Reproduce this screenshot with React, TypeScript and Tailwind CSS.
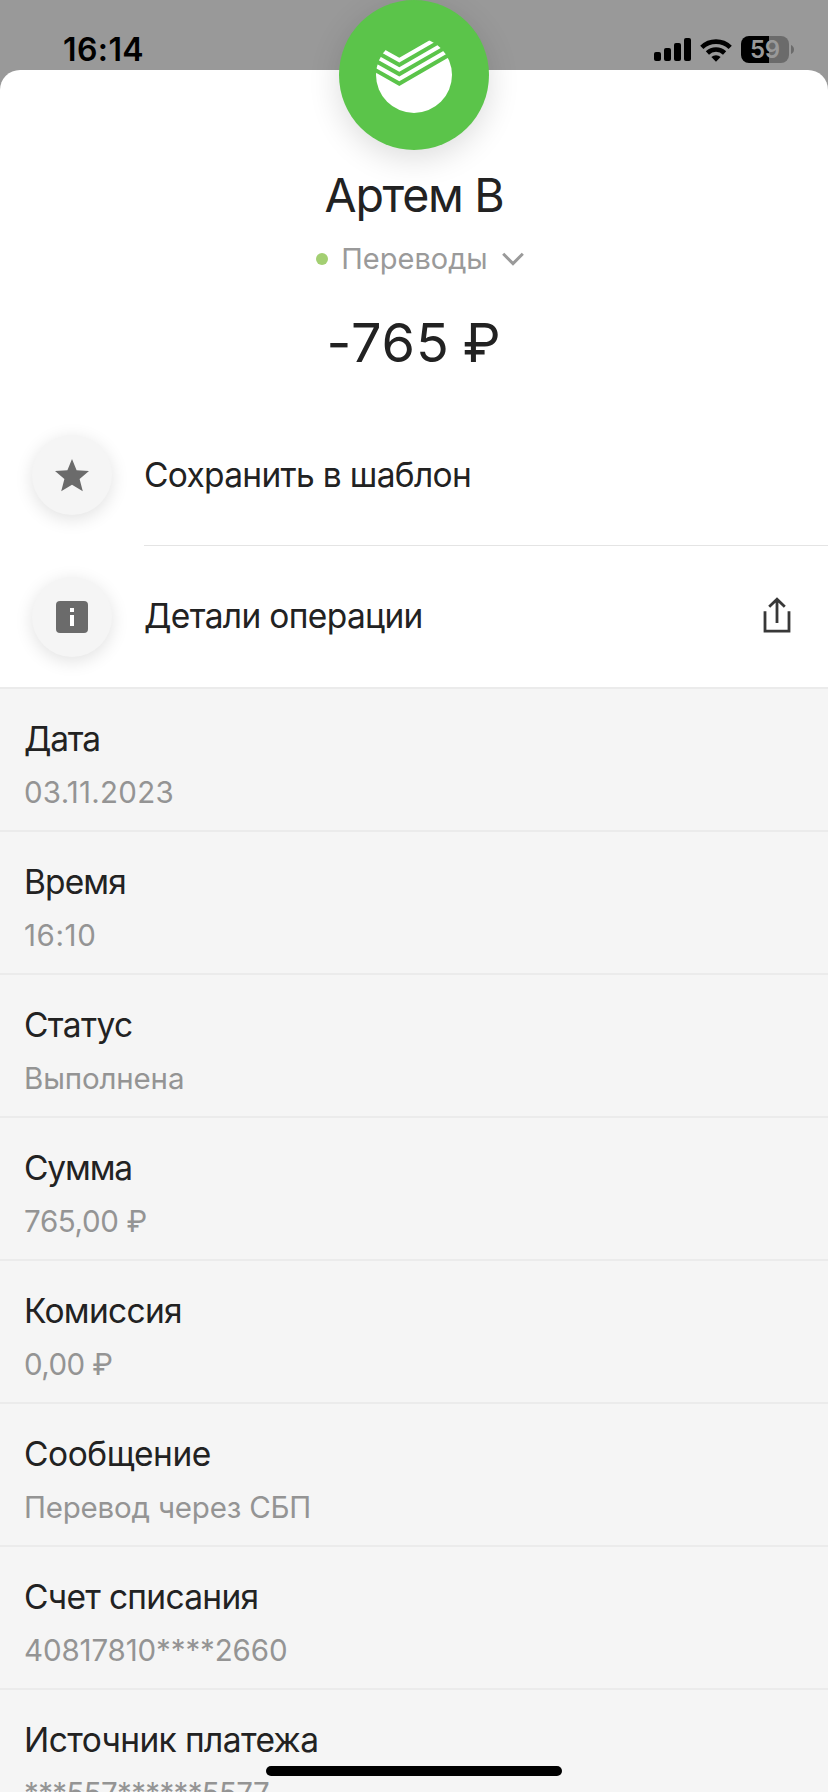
const details = [
  { label: "Дата", labelClass: "tracking-[-1.2px]", value: "03.11.2023", valueClass: "tracking-[0.25px]" },
  { label: "Время", labelClass: "tracking-[-0.9px]", value: "16:10", valueClass: "tracking-[0.6px]" },
  { label: "Статус", labelClass: "tracking-[-0.65px]", value: "Выполнена", valueClass: "tracking-[-0.15px]" },
  { label: "Сумма", labelClass: "tracking-[-1.15px]", value: "765,00 ₽", valueClass: "tracking-[-0.35px]" },
  { label: "Комиссия", labelClass: "tracking-[-0.7px]", value: "0,00 ₽", valueClass: "tracking-[-0.6px]" },
  { label: "Сообщение", labelClass: "tracking-[-0.45px]", value: "Перевод через СБП", valueClass: "tracking-[-0.2px]" },
  { label: "Счет списания", labelClass: "tracking-[-0.7px]", value: "40817810****2660", valueClass: "tracking-[-0.12px]" },
  { label: "Источник платежа", labelClass: "tracking-[-0.6px]", value: "***557******5577", valueClass: "tracking-[-0.65px]" },
];

function SignalIcon() {
  return (
    <svg width="37" height="23" viewBox="0 0 37 23" className="shrink-0">
      <rect x="0" y="14" width="7" height="9" rx="2" />
      <rect x="10" y="10" width="7" height="13" rx="2" />
      <rect x="20" y="5" width="7" height="18" rx="2" />
      <rect x="30" y="0" width="7" height="23" rx="2" />
    </svg>
  );
}

function WifiIcon() {
  return (
    <svg width="32" height="24" viewBox="0 0 32 24" className="shrink-0">
      <g fill="none" stroke="#000" strokeWidth="4.6">
        <path d="M1.8 9.4A20.4 20.4 0 0 1 30.2 9.4" />
        <path d="M7.4 15A12.4 12.4 0 0 1 24.6 15" />
      </g>
      <path d="M11.4 19A6.6 6.6 0 0 1 20.6 19L16 23.8Z" />
    </svg>
  );
}

function Battery() {
  return (
    <div className="flex items-center gap-0.5">
      <div className="flex h-[27px] w-12 items-center justify-center rounded-[8px] bg-[linear-gradient(90deg,#000_28px,#6b6b6b_28px)]">
        <span className="text-[24px] leading-none font-semibold tracking-[-0.2px] text-[#999]">59</span>
      </div>
      <svg width="3" height="9" viewBox="0 0 3 9">
        <path d="M0 0Q3 1.5 3 4.5T0 9Z" fill="#6b6b6b" />
      </svg>
    </div>
  );
}

function BankLogo() {
  return (
    <svg width="76" height="76" viewBox="0 0 76 76">
      <defs>
        <clipPath id="disc">
          <circle cx="38" cy="38" r="38" />
        </clipPath>
      </defs>
      <g clipPath="url(#disc)" fill="#fff">
        <path d="M-4 5.5L23.3 20.8L76 -9.6V-4.9L23.3 25.5L-4 10.2Z" />
        <path d="M-4 14.9L23.3 30.2L76 -.2V4.5L23.3 34.8L-4 19.5Z" />
        <path d="M-4 24.3L23.3 39.5L76 9.1V13.8L23.3 44.2L-4 28.9Z" />
        <path d="M-4 33.6L23.3 48.9L76 18.5V76H-4Z" />
      </g>
    </svg>
  );
}

function StarIcon() {
  return (
    <svg width="34" height="33" viewBox="0 0 34 33" fill="#6b6b6b">
      <path d="M17 0L21.6 11.2L34 12L24.6 20L27.8 32.3L17 25.8L6.2 32.3L9.4 20L0 12L12.4 11.2Z" />
    </svg>
  );
}

function InfoIcon() {
  return (
    <svg width="32" height="32" viewBox="0 0 32 32">
      <rect width="32" height="32" rx="4" fill="#6b6b6b" />
      <path d="M14 7h4v4h-4zM14 14h4v11h-4z" fill="#fff" />
    </svg>
  );
}

function ShareIcon() {
  return (
    <svg width="28" height="36" viewBox="0 0 28 36" className="mb-1" fill="none" stroke="#383838" strokeWidth="2.8">
      <path d="M2 14.2V34.2H26V14.2" />
      <path d="M14 2V26M6.2 9.8L14 2.2L21.8 9.8" />
    </svg>
  );
}

export default function App() {
  return (
    <div className="relative flex h-[1792px] w-[828px] flex-col overflow-hidden bg-[#999] font-['Inter',sans-serif] text-[#222]">
      {/* status bar */}
      <div className="flex h-[70px] shrink-0 items-start justify-between pr-[34px] pl-[63px] text-black">
        <span className="pt-[30px] text-[32px] leading-[40px] font-semibold tracking-[0.4px]">16:14</span>
        <div className="flex items-center pt-9">
          <SignalIcon />
          <div className="mr-[9px] ml-[9px]">
            <WifiIcon />
          </div>
          <Battery />
        </div>
      </div>

      {/* bottom sheet */}
      <div className="flex flex-1 flex-col rounded-t-[20px] bg-white">
        <div className="flex h-[335px] shrink-0 flex-col items-center pt-[97px]">
          <h1 className="text-[46.5px] leading-[56px] tracking-[-1.3px]">Артем В</h1>
          <div className="mt-4 ml-[12px] flex h-10 items-center">
            <span className="mr-[13px] h-3 w-3 rounded-full bg-[#a3cf72]" />
            <span className="text-[29px] leading-[40px] text-[#9a9a9a]">Переводы</span>
            <svg width="22" height="14" viewBox="0 0 22 14" className="ml-[14px]" fill="none" stroke="#9a9a9a" strokeWidth="3">
              <path d="M1.2 1.8L11 11.6L20.8 1.8" />
            </svg>
          </div>
          <div className="mt-8 text-[54px] leading-[64px] tracking-[0.9px] [word-spacing:-3px]">-765 ₽</div>
        </div>

        <div className="flex h-[141px] shrink-0 pl-8">
          <div className="mt-[30px] mr-8 flex h-20 w-20 items-center justify-center rounded-full bg-[#f5f5f5] shadow-[0_4px_18px_rgba(0,0,0,0.12)]">
            <StarIcon />
          </div>
          <div className="flex flex-1 items-center border-b border-[#e4e4e4]">
            <span className="text-[33.5px] leading-[40px] tracking-[-0.68px]">Сохранить в шаблон</span>
          </div>
        </div>
        <div className="flex h-[141px] shrink-0 items-center pr-[37px] pl-8">
          <div className="mr-8 flex h-20 w-20 items-center justify-center rounded-full bg-[#f5f5f5] shadow-[0_4px_18px_rgba(0,0,0,0.12)]">
            <InfoIcon />
          </div>
          <span className="flex-1 pb-0.5 text-[33.5px] leading-[40px] tracking-[-0.65px]">Детали операции</span>
          <ShareIcon />
        </div>

        {/* operation details */}
        <div className="bg-[#f5f5f5]">
          {details.map((item) => (
            <div key={item.label} className="h-[143px] border-t-2 border-[#ebebeb] pt-[30px] pl-6">
              <div className={`text-[33.5px] leading-[40px] ${item.labelClass}`}>{item.label}</div>
              <div className={`mt-[13px] text-[29.5px] leading-[40px] text-[#949494] ${item.valueClass}`}>{item.value}</div>
            </div>
          ))}
        </div>
      </div>

      {/* bank badge */}
      <div className="absolute top-0 left-[339px] flex h-[150px] w-[150px] items-center justify-center rounded-full bg-[#5bc44a] shadow-[0_8px_32px_rgba(0,0,0,0.14)]">
        <BankLogo />
      </div>

      {/* home indicator */}
      <div className="absolute top-[1766px] left-[266px] h-[10px] w-[296px] rounded-full bg-black" />
    </div>
  );
}
